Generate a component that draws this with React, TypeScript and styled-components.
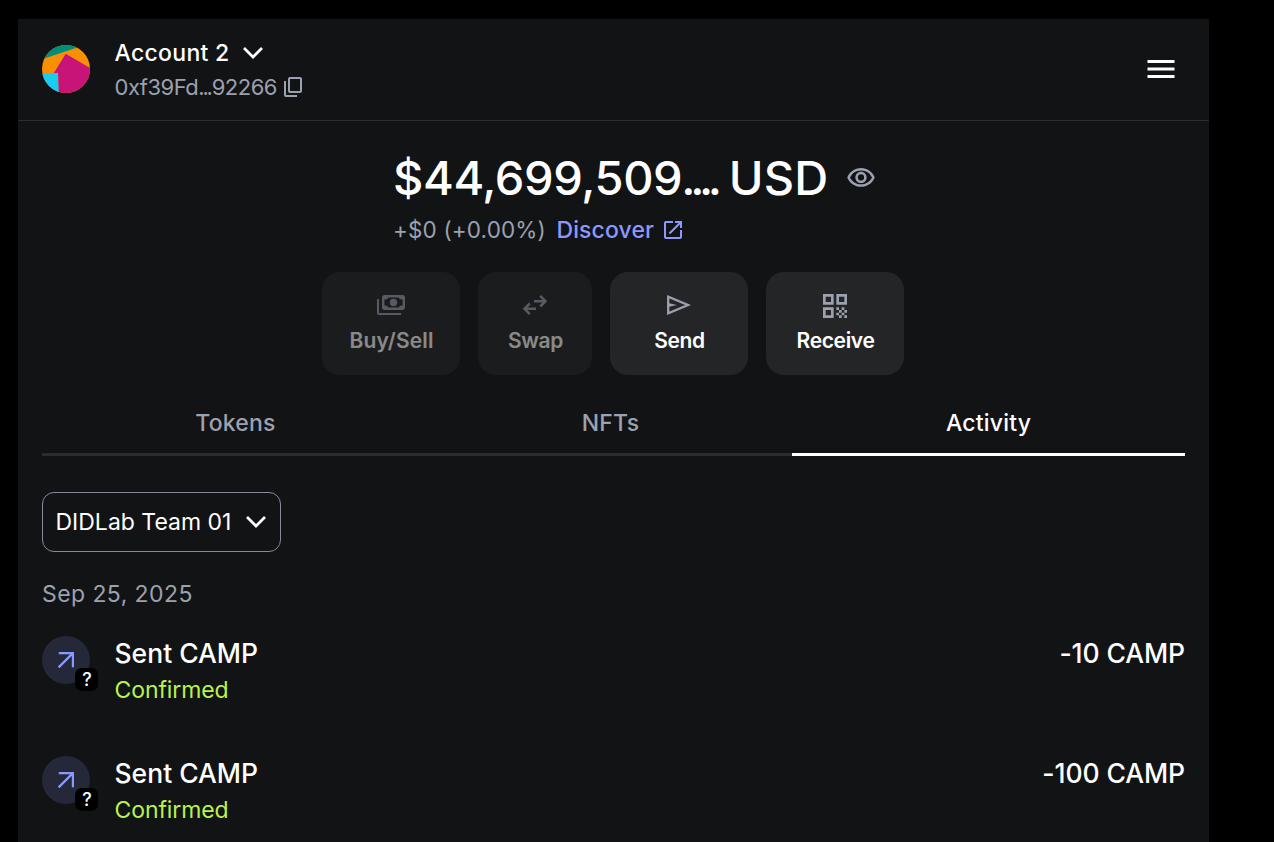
import React from "react";
import styled, { createGlobalStyle } from "styled-components";
import { MdOpenInNew, MdOutlineVisibility, MdQrCode } from "react-icons/md";

const colors = {
  page: "#000000",
  panel: "#121314",
  line: "#2b2c2e",
  text: "#ffffff",
  muted: "#9ca1af",
  link: "#8b99ff",
  success: "#baf24a",
  button: "#242527",
};

const GlobalStyle = createGlobalStyle`
  *, *::before, *::after { box-sizing: border-box; }
  body {
    margin: 0;
    background: ${colors.page};
    color: ${colors.text};
    font-family: Inter, "Liberation Sans", sans-serif;
    overflow: hidden;
  }
  button { font: inherit; color: inherit; border: 0; background: none; padding: 0; }
  svg { display: block; flex: none; }
`;

const Page = styled.div`
  height: 842px;
  padding: 19px 65px 0 18px;
  overflow: hidden;
`;

const Panel = styled.main`
  height: 823px;
  background: ${colors.panel};
`;

const Header = styled.header`
  display: flex;
  align-items: center;
  height: 102px;
  padding: 0 34px 1px 24px;
  border-bottom: 1px solid ${colors.line};
`;

const Account = styled.div`
  flex: 1;
  margin-left: 24.5px;
`;

const AccountName = styled.button`
  display: flex;
  align-items: center;
  gap: 12px;
  font-size: 23px;
  font-weight: 500;
  line-height: 36px;
  letter-spacing: 0.3px;
`;

const Address = styled.div`
  display: flex;
  align-items: center;
  gap: 7.5px;
  color: ${colors.muted};
  font-size: 22px;
  line-height: 33px;
  letter-spacing: -0.5px;
`;

const AddressDots = styled.span`
  letter-spacing: -2.2px;
  margin-right: 1px;
`;

const Balance = styled.section`
  width: 441px;
  margin: 27px auto 0;
  white-space: nowrap;
`;

const Total = styled.div`
  display: flex;
  align-items: center;
  height: 60px;
  font-size: 47px;
  font-weight: 500;
  line-height: 60px;
`;

const Amount = styled.span`
  letter-spacing: -0.4px;
`;

const AmountDots = styled.span`
  letter-spacing: -5.4px;
  margin-left: -1px;
`;

const Currency = styled.span`
  margin: 0 18px 0 12px;
  letter-spacing: 0.2px;
`;

const EyeIcon = styled(MdOutlineVisibility)`
  color: ${colors.muted};
`;

const Change = styled.div`
  display: flex;
  align-items: center;
  margin-top: 4px;
  color: ${colors.muted};
  font-size: 22.5px;
  line-height: 36px;
  letter-spacing: 0.15px;
`;

const Discover = styled.a`
  display: flex;
  align-items: center;
  gap: 6.5px;
  margin-left: 10.5px;
  color: ${colors.link};
  font-size: 23px;
  font-weight: 500;
  letter-spacing: 0.12px;
`;

const Actions = styled.div`
  display: flex;
  justify-content: center;
  gap: 18px;
  margin-top: 24px;
  padding-right: 1px;
`;

const ActionButton = styled.button<{ $width: number; $tracking: number }>`
  display: flex;
  flex-direction: column;
  align-items: center;
  gap: 4px;
  width: ${(p) => p.$width}px;
  height: 103px;
  padding: 18px 0 0 1px;
  border-radius: 18px;
  background: ${colors.button};
  font-size: 21px;
  font-weight: 600;
  line-height: 33px;
  letter-spacing: ${(p) => p.$tracking}px;

  &:disabled { opacity: 0.5; }
`;

const ActionIcon = styled.span`
  display: grid;
  place-items: center;
  height: 30px;
  margin-right: 1px;
  color: ${colors.muted};
`;

const Content = styled.section`
  padding: 0 24px;
`;

const Tabs = styled.nav`
  display: grid;
  grid-template-columns: 387fr 363fr 393fr;
  margin-top: 30px;
`;

const Tab = styled.button<{ $active?: boolean }>`
  padding-bottom: 12px;
  border-bottom: 3px solid ${(p) => (p.$active ? colors.text : colors.line)};
  color: ${(p) => (p.$active ? colors.text : colors.muted)};
  font-size: 23px;
  font-weight: 500;
  line-height: 36px;
  letter-spacing: 0.2px;
`;

const NetworkSelect = styled.button`
  display: flex;
  align-items: center;
  justify-content: space-between;
  width: 239px;
  height: 60px;
  margin-top: 36px;
  padding: 0 13px 1px 12.5px;
  border: 1px solid #858b9a;
  border-radius: 12px;
  font-size: 23px;
  letter-spacing: 0;
`;

const DateLabel = styled.h2`
  margin: 24px 0 0;
  color: ${colors.muted};
  font-size: 23px;
  font-weight: 400;
  line-height: 36px;
  letter-spacing: 0.42px;
`;

const ActivityRow = styled.article`
  display: flex;
  align-items: flex-start;
  height: 120px;
  padding-top: 23px;
`;

const SentBadge = styled.div`
  position: relative;
  display: grid;
  place-items: center;
  width: 48px;
  height: 48px;
  margin: 1px 24.5px 0 0;
  border-radius: 50%;
  background: #252839;
`;

const NetworkBadge = styled.span`
  position: absolute;
  left: 33px;
  top: 32px;
  width: 23px;
  height: 23px;
  border-radius: 7px;
  background: #000;
  font-size: 18px;
  font-weight: 500;
  line-height: 24px;
  padding-left: 1px;
  text-align: center;
`;

const RowText = styled.div`
  flex: 1;
`;

const RowTitle = styled.div`
  font-size: 26.5px;
  font-weight: 500;
  line-height: 36px;
`;

const Amounts = styled(RowTitle)`
  letter-spacing: -0.08px;
`;

const Status = styled.div`
  margin-top: 1px;
  color: ${colors.success};
  font-size: 23px;
  line-height: 36px;
  letter-spacing: -0.1px;
`;

function Avatar() {
  return (
    <svg width="48" height="48" viewBox="0 0 48 48">
      <clipPath id="avatar"><circle cx="24" cy="24" r="24" /></clipPath>
      <g clipPath="url(#avatar)">
        <path fill="#f98f02" d="M0 0h48v48H0z" />
        <path fill="#018e78" d="M0 14.2 36 2.2V0H0z" />
        <path fill="#18cdf2" d="M0 28.7 16 27.8 17 48H0z" />
        <path fill="#c81478" d="M23.7 8.7 48 23v25H16.8L16 27.8l-4.3.4z" />
      </g>
    </svg>
  );
}

function Chevron() {
  return (
    <svg width="22" height="14" viewBox="0 0 22 14" fill="none" stroke="currentColor" strokeWidth="2.7">
      <path d="M2 2l9 9 9-9" />
    </svg>
  );
}

function CopyIcon() {
  return (
    <svg width="18" height="20" viewBox="0 0 18 20" fill="none" stroke="currentColor" strokeWidth="2">
      <rect x="5" y="1" width="12" height="14" rx="1" />
      <path d="M1 4v14q0 1 1 1h11" />
    </svg>
  );
}

function MenuIcon() {
  return (
    <svg width="28" height="18" viewBox="0 0 28 18" fill="currentColor">
      <path d="M.5 0h27v3H.5zM.5 7.5h27v3H.5zM.5 15h27v3H.5z" />
    </svg>
  );
}

function CashIcon() {
  return (
    <svg width="28" height="20" viewBox="0 0 28 20" fill="none" stroke="currentColor" strokeWidth="2">
      <path d="M1 4v14q0 1 1 1h22" />
      <rect x="6.2" y="1.2" width="20.6" height="12.6" rx="1.5" strokeWidth="2.4" />
      <path fill="currentColor" stroke="none" d="M6 1h5.5q0 3.5-3.5 3.5H6zM27 1h-5.5q0 3.5 3.5 3.5h2zM6 14h5.5q0-3.5-3.5-3.5H6zM27 14h-5.5q0-3.5 3.5-3.5h2z" />
      <circle cx="16.5" cy="7.5" r="3.7" fill="currentColor" stroke="none" />
    </svg>
  );
}

function SwapIcon() {
  return (
    <svg width="26" height="20" viewBox="0 0 26 20" fill="none" stroke="currentColor" strokeWidth="2.5">
      <path d="M12 6.2h11.5M18.2.9l5.3 5.3-5.3 5.3M14 13.8H2.5M7.8 8.5l-5.3 5.3 5.3 5.3" />
    </svg>
  );
}

function SendIcon() {
  return (
    <svg width="24" height="20" viewBox="0 0 24 20" fill="none" stroke="currentColor" strokeWidth="2.3">
      <path d="M1.2 1.8v16.4L21 10z" />
      <path fill="currentColor" stroke="none" d="M1.2 8 9.8 10l-8.6 2z" />
    </svg>
  );
}

function SentArrow() {
  return (
    <svg width="18" height="18" viewBox="0 0 18 18" fill="none" stroke={colors.link} strokeWidth="2.2">
      <path d="M1.8 2.1h14.1v14.1M15.9 2.1 1.6 16.4" />
    </svg>
  );
}

const transactions = [
  { title: "Sent CAMP", status: "Confirmed", amount: "-10 CAMP" },
  { title: "Sent CAMP", status: "Confirmed", amount: "-100 CAMP" },
];

export default function App() {
  return (
    <Page>
      <GlobalStyle />
      <Panel>
        <Header>
          <Avatar />
          <Account>
            <AccountName>Account 2 <Chevron /></AccountName>
            <Address>
              <span>0xf39Fd<AddressDots>...</AddressDots>92266</span>
              <CopyIcon />
            </Address>
          </Account>
          <MenuIcon />
        </Header>

        <Balance>
          <Total>
            <Amount>$44,699,509<AmountDots>....</AmountDots></Amount>
            <Currency>USD</Currency>
            <EyeIcon size={30} />
          </Total>
          <Change>
            +$0 (+0.00%)
            <Discover>Discover <MdOpenInNew size={24} /></Discover>
          </Change>
        </Balance>

        <Actions>
          <ActionButton $width={138} $tracking={0.15} disabled>
            <ActionIcon><CashIcon /></ActionIcon>Buy/Sell
          </ActionButton>
          <ActionButton $width={114} $tracking={-0.4} disabled>
            <ActionIcon><SwapIcon /></ActionIcon>Swap
          </ActionButton>
          <ActionButton $width={138} $tracking={-0.35}>
            <ActionIcon><SendIcon /></ActionIcon>Send
          </ActionButton>
          <ActionButton $width={138} $tracking={-0.35}>
            <ActionIcon><MdQrCode size={32} /></ActionIcon>Receive
          </ActionButton>
        </Actions>

        <Content>
          <Tabs>
            <Tab>Tokens</Tab>
            <Tab>NFTs</Tab>
            <Tab $active>Activity</Tab>
          </Tabs>
          <NetworkSelect>DIDLab Team 01 <Chevron /></NetworkSelect>
          <DateLabel>Sep 25, 2025</DateLabel>
          {transactions.map((tx) => (
            <ActivityRow key={tx.amount}>
              <SentBadge>
                <SentArrow />
                <NetworkBadge>?</NetworkBadge>
              </SentBadge>
              <RowText>
                <RowTitle>{tx.title}</RowTitle>
                <Status>{tx.status}</Status>
              </RowText>
              <Amounts>{tx.amount}</Amounts>
            </ActivityRow>
          ))}
        </Content>
      </Panel>
    </Page>
  );
}
